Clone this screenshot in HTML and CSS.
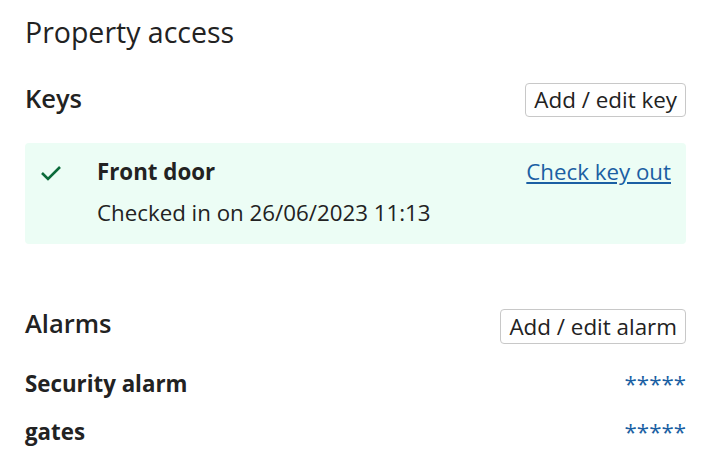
FILE: index.html
```html
<!DOCTYPE html>
<html lang="en">
<head>
  <meta charset="UTF-8" />
  <title>Property access</title>
  <link rel="stylesheet" href="styles.css">
</head>
<body>
  <div class="page">
    <h1>Property access</h1>

    <div class="section-head">
      <h2>Keys</h2>
      <button type="button">Add / edit key</button>
    </div>

    <div class="key-card">
      <svg class="tick" width="22" height="16" viewBox="0 0 22 16">
        <path d="M2 8 L8 14 L20 2" fill="none" stroke="#0b6b3a" stroke-width="2.6" />
      </svg>
      <div class="key-info">
        <strong>Front door</strong>
        <span>Checked in on 26/06/2023 11:13</span>
      </div>
      <a href="#" class="key-link">Check key out</a>
    </div>

    <div class="section-head alarms">
      <h2>Alarms</h2>
      <button type="button">Add / edit alarm</button>
    </div>

    <div class="alarm-row">
      <strong>Security alarm</strong>
      <a href="#">*****</a>
    </div>
    <div class="alarm-row">
      <strong>gates</strong>
      <a href="#">*****</a>
    </div>
  </div>
</body>
</html>
```

FILE: styles.css
```css
* {
  box-sizing: border-box;
  font-family: 'Open Sans', 'Noto Sans', sans-serif;
}
body {
  margin: 0;
  background: white;
  color: #222;
}
.page {
  padding: 12px 20px 0 25px;
}
h1 {
  margin: 0;
  font-size: 28.5px;
  font-weight: 400;
  line-height: 40px;
}
.section-head {
  display: flex;
  justify-content: space-between;
  align-items: center;
  margin-top: 31px;
}
h2 {
  margin: 0 0 4px;
  font-size: 25.5px;
  font-weight: 600;
  line-height: 26px;
}
button {
  font-size: 22.4px;
  color: #222;
  background: white;
  border: 1px solid #c8c8c8;
  border-radius: 4px;
  padding: 2px 8px;
  line-height: 28px;
}
.key-card {
  display: flex;
  align-items: flex-start;
  background: #ecfdf5;
  border-radius: 4px;
  margin-top: 26px;
  padding: 14px 15px 16px 15px;
}
.tick {
  margin-top: 8px;
  margin-right: 35px;
}
.key-info {
  flex: 1;
  display: flex;
  flex-direction: column;
  gap: 11px;
  font-size: 22.3px;
  line-height: 30px;
}
.key-info strong {
  font-weight: 700;
}
.key-link {
  font-size: 22.3px;
  line-height: 30px;
  color: #1b5fa3;
}
.alarms {
  margin-top: 65px;
}
.alarms h2 {
  margin-bottom: 8px;
}
.alarms button {
  line-height: 29px;
}
.alarm-row {
  display: flex;
  justify-content: space-between;
  align-items: center;
  font-size: 22.3px;
  line-height: 30px;
  margin-top: 25px;
}
.alarm-row + .alarm-row {
  margin-top: 18px;
}
.alarm-row a {
  color: #1b5fa3;
  text-decoration: none;
}
```
